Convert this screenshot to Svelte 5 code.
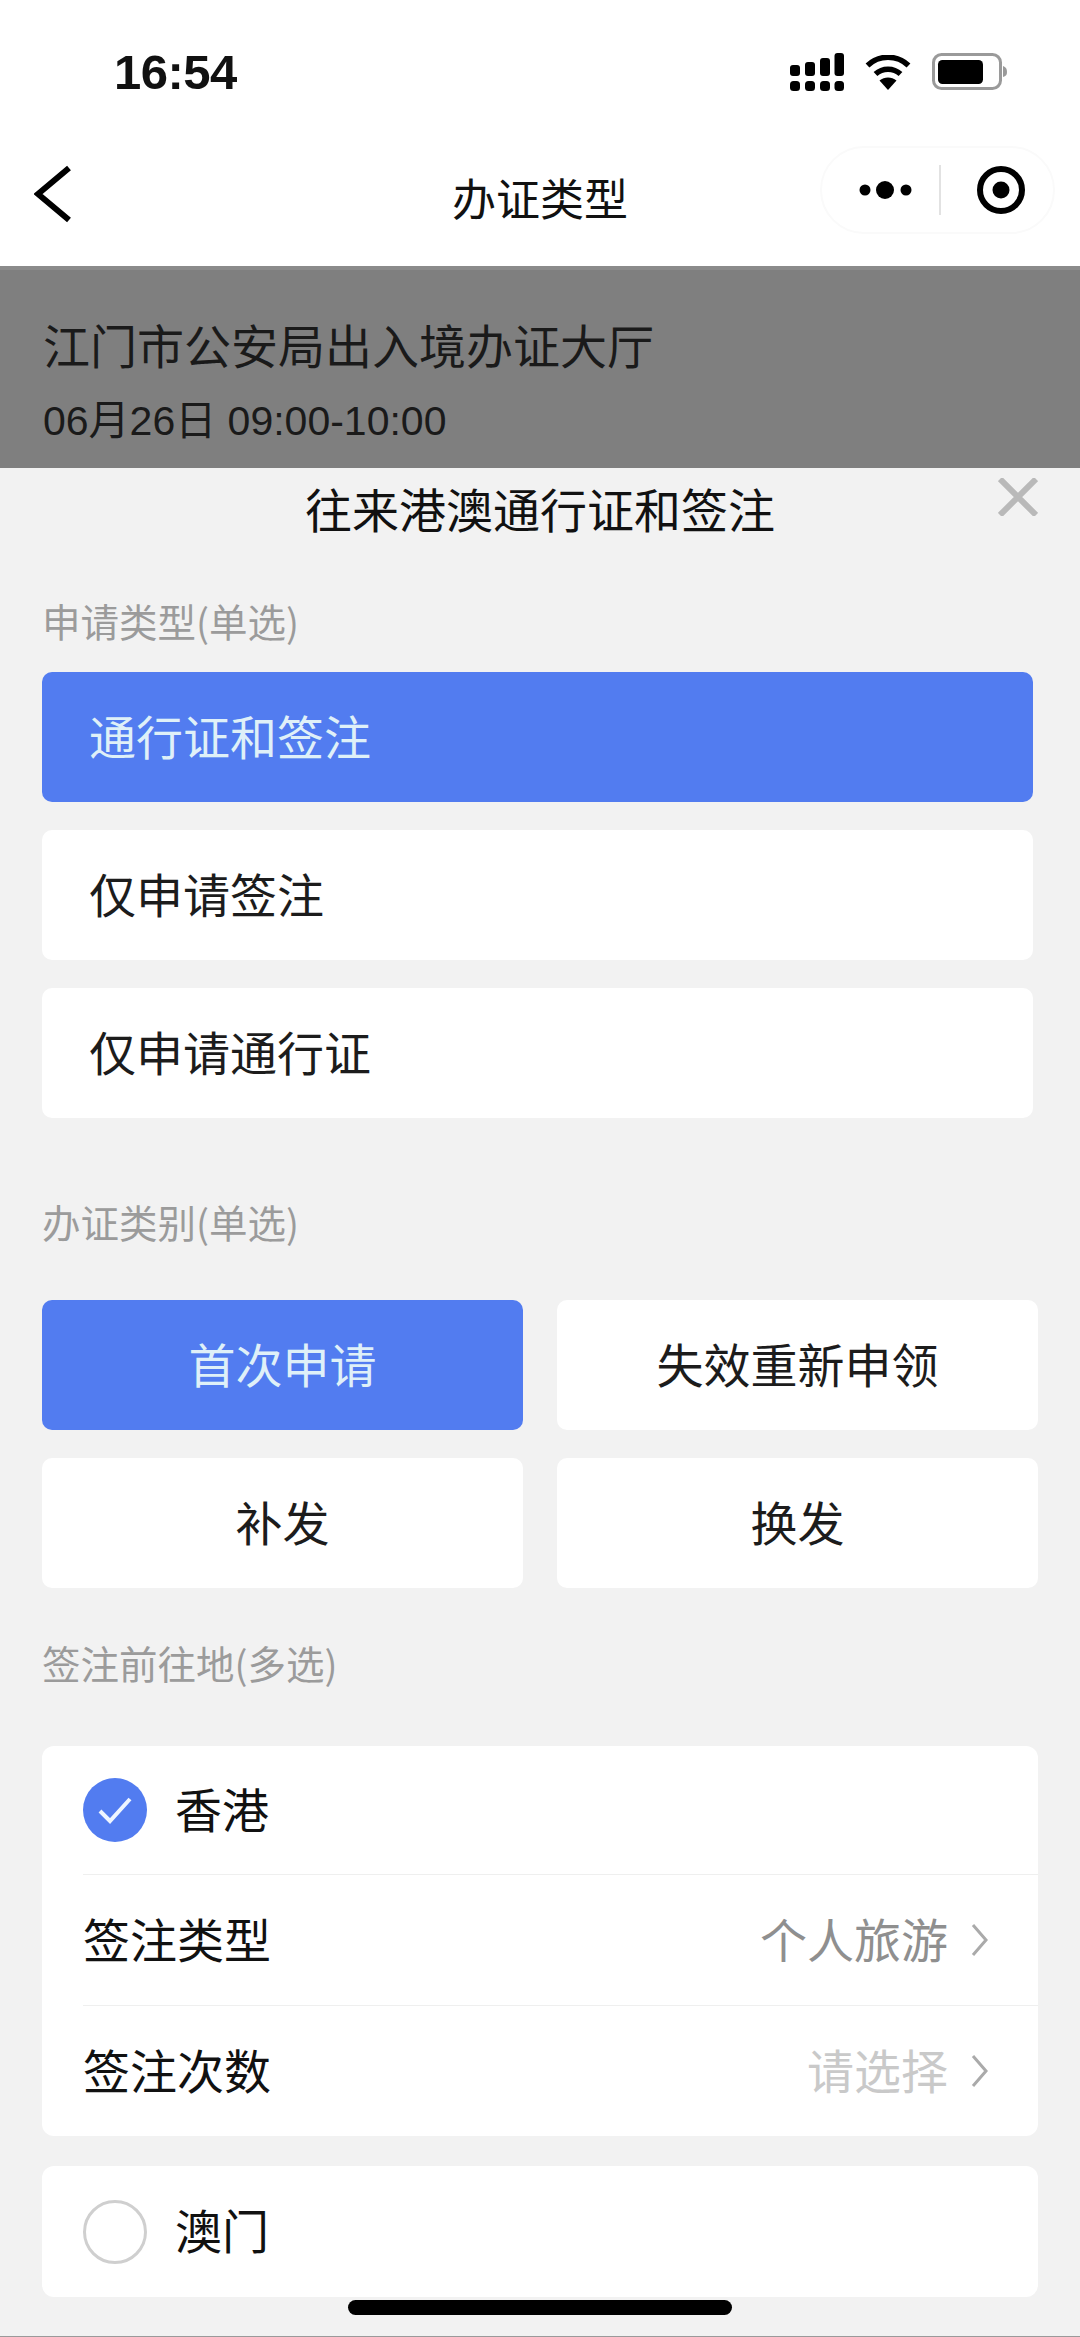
<script lang="ts">
	const applyTypes = [
		{ label: '通行证和签注', active: true },
		{ label: '仅申请签注', active: false },
		{ label: '仅申请通行证', active: false }
	];
	const categories = [
		{ label: '首次申请', active: true },
		{ label: '失效重新申领', active: false },
		{ label: '补发', active: false },
		{ label: '换发', active: false }
	];
</script>

<div class="page">
	<header class="topbar">
		<div class="status">
			<span class="time">16:54</span>
			<div class="status-icons">
				<svg class="signal" width="54" height="38" viewBox="0 0 54 38" fill="#000">
					<rect x="0" y="12" width="10" height="11" rx="3" />
					<rect x="15" y="9" width="10" height="14" rx="3" />
					<rect x="30" y="5" width="10" height="18" rx="3" />
					<rect x="44.500" y="0" width="9.500" height="23" rx="3" />
					<rect x="0" y="28" width="10" height="10" rx="3.500" />
					<rect x="15" y="28" width="10" height="10" rx="3.500" />
					<rect x="30" y="28" width="10" height="10" rx="3.500" />
					<rect x="44.500" y="28" width="9.500" height="10" rx="3.500" />
				</svg>
				<svg class="wifi" width="46" height="35" viewBox="0 0 46 35">
					<path d="M2.500 10.500C14 -0.500 32 -0.500 43.500 10.500" fill="none" stroke="#000" stroke-width="5.500" />
					<path d="M10.500 19C17.500 12.500 28.500 12.500 35.500 19" fill="none" stroke="#000" stroke-width="5.500" />
					<path d="M23 35L14.500 25.500C19.500 21.500 26.500 21.500 31.500 25.500Z" fill="#000" />
				</svg>
				<svg class="battery" width="76" height="38" viewBox="0 0 76 38">
					<rect x="1.500" y="1.500" width="67" height="34" rx="8" fill="#fff" stroke="#9a9a9a" stroke-width="3" />
					<rect x="6" y="7" width="45" height="24" rx="4.500" fill="#000" />
					<path d="M71 13C74 14 75 16 75 19C75 22 74 23 71 24Z" fill="#9a9a9a" />
				</svg>
			</div>
		</div>
		<nav class="nav">
			<svg class="back" width="40" height="58" viewBox="0 0 40 58">
				<path d="M35 3L4 29L35 55" fill="none" stroke="#000" stroke-width="6" />
			</svg>
			<h1 class="nav-title">办证类型</h1>
			<div class="capsule">
				<svg width="58" height="24" viewBox="0 0 58 24" fill="#000">
					<circle cx="7" cy="12" r="5.500" />
					<circle cx="27" cy="12" r="9" />
					<circle cx="48" cy="12" r="5.500" />
				</svg>
				<span class="capsule-line"></span>
				<svg width="50" height="50" viewBox="0 0 50 50">
					<circle cx="25" cy="25" r="21" fill="none" stroke="#000" stroke-width="6" />
					<circle cx="25" cy="25" r="8.500" fill="#000" />
				</svg>
			</div>
		</nav>
	</header>

	<section class="office">
		<div class="office-name">江门市公安局出入境办证大厅</div>
		<div class="office-time">06月26日 09:00-10:00</div>
	</section>

	<section class="sheet">
		<svg class="close" width="40" height="38" viewBox="0 0 40 38">
			<path d="M2 1L38 37M38 1L2 37" fill="none" stroke="#b9b9b9" stroke-width="6" />
		</svg>
		<h2 class="sheet-title">往来港澳通行证和签注</h2>

		<div class="label label-first">申请类型(单选)</div>
		<div class="stack">
			{#each applyTypes as item}
				<div class="option left" class:active={item.active}>{item.label}</div>
			{/each}
		</div>

		<div class="label label-second">办证类别(单选)</div>
		<div class="grid">
			{#each categories as item}
				<div class="option center" class:active={item.active}>{item.label}</div>
			{/each}
		</div>

		<div class="label label-third">签注前往地(多选)</div>
		<div class="card">
			<div class="row row-head">
				<span class="check on">
					<svg width="64" height="64" viewBox="0 0 64 64">
						<path d="M17 33L27 43L47 21" fill="none" stroke="#eef5ff" stroke-width="4" />
					</svg>
				</span>
				<span class="text">香港</span>
			</div>
			<div class="row field">
				<span class="text">签注类型</span>
				<span class="text value">个人旅游</span>
				<svg class="chevron" width="18" height="32" viewBox="0 0 18 32">
					<path d="M2 1L15 16L2 31" fill="none" stroke="#aaa" stroke-width="3" />
				</svg>
			</div>
			<div class="row field">
				<span class="text">签注次数</span>
				<span class="text value empty">请选择</span>
				<svg class="chevron" width="18" height="32" viewBox="0 0 18 32">
					<path d="M2 1L15 16L2 31" fill="none" stroke="#aaa" stroke-width="3" />
				</svg>
			</div>
		</div>
		<div class="card card-macau">
			<div class="row row-macau">
				<span class="check"></span>
				<span class="text">澳门</span>
			</div>
		</div>
	</section>

	<div class="home-bar"></div>
</div>

<style>
	:global(body) {
		margin: 0;
		background: #f2f2f2;
	}

	.page {
		position: relative;
		width: 1080px;
		height: 2337px;
		overflow: hidden;
		font-family: 'Noto Sans CJK SC', 'Liberation Sans', sans-serif;
		color: #111;
		border-bottom: 1px solid #9a9a9a;
		box-sizing: border-box;
	}

	.topbar {
		height: 266px;
		background: #fff;
	}

	.status {
		display: flex;
		align-items: center;
		justify-content: space-between;
		height: 144px;
		padding: 0 72px 0 114px;
		box-sizing: border-box;
	}

	.time {
		font-family: 'Liberation Sans', sans-serif;
		font-size: 49px;
		font-weight: 700;
		letter-spacing: -0.5px;
		color: #111;
	}

	.status-icons {
		display: flex;
		align-items: center;
		gap: 21px;
	}

	.nav {
		position: relative;
		display: flex;
		align-items: center;
		justify-content: center;
		height: 104px;
	}

	.back {
		position: absolute;
		left: 34px;
		top: 21px;
	}

	.nav-title {
		margin: 2px 0 0 0;
		font-size: 44px;
		font-weight: 400;
		line-height: 60px;
		color: #111;
	}

	.capsule {
		position: absolute;
		right: 25px;
		top: 2px;
		display: flex;
		align-items: center;
		width: 235px;
		height: 88px;
		box-sizing: border-box;
		padding-left: 36px;
		border: 2px solid #fafafa;
		border-radius: 44px;
	}

	.capsule-line {
		width: 2px;
		height: 50px;
		margin: 0 35px 0 23px;
		background: #e2e2e2;
	}

	.office {
		display: flex;
		flex-direction: column;
		height: 202px;
		padding: 0 0 0 43px;
		box-sizing: border-box;
		background: #7f7f7f;
		color: #1a1a1a;
		border-top: 4px solid #8b8b8b;
	}

	.office-name {
		margin-top: 44px;
		font-size: 47px;
		line-height: 60px;
	}

	.office-time {
		margin-top: 25px;
		font-family: 'Liberation Sans', 'Noto Sans CJK SC', sans-serif;
		font-size: 41px;
		line-height: 44px;
	}

	.sheet {
		position: relative;
		padding: 0 42px;
		background: #f2f2f2;
	}

	.close {
		position: absolute;
		top: 10px;
		right: 42px;
	}

	.sheet-title {
		margin: 0;
		height: 84px;
		font-size: 47px;
		font-weight: 400;
		line-height: 80px;
		text-align: center;
		color: #111;
	}

	.label {
		height: 60px;
		font-size: 38.500px;
		line-height: 56px;
		color: #9b9b9b;
	}

	.label-first {
		margin-top: 40px;
		margin-bottom: 20px;
	}

	.label-second {
		margin-top: 75px;
		margin-bottom: 47px;
	}

	.label-third {
		margin-top: 46px;
		margin-bottom: 52px;
	}

	.stack {
		display: flex;
		flex-direction: column;
		gap: 28px;
		width: 991px;
	}

	.grid {
		display: grid;
		grid-template-columns: 481px 481px;
		gap: 28px 34px;
	}

	.option {
		display: flex;
		align-items: center;
		height: 130px;
		padding-bottom: 5px;
		box-sizing: border-box;
		background: #fff;
		border-radius: 10px;
		font-size: 47px;
		color: #1c1c1c;
	}

	.option.left {
		padding-left: 47px;
	}

	.option.center {
		justify-content: center;
	}

	.option.active {
		background: #527cf0;
		color: #dff0f8;
	}

	.card {
		width: 996px;
		background: #fff;
		border-radius: 12px;
	}

	.card-macau {
		margin-top: 30px;
	}

	.row {
		display: flex;
		align-items: center;
		height: 130px;
		margin-left: 41px;
		font-size: 47px;
		color: #111;
	}

	.row-head {
		height: 128px;
	}

	.row-macau {
		height: 131px;
	}

	.row + .row {
		border-top: 1px solid #efefef;
	}

	.text {
		position: relative;
		top: -3px;
	}

	.check {
		flex: none;
		width: 64px;
		height: 64px;
		margin-right: 28px;
		box-sizing: border-box;
		border: 3px solid #cfcfcf;
		border-radius: 50%;
	}

	.check.on {
		border: 0;
		background: #527cf0;
	}

	.check svg {
		display: block;
	}

	.field {
		padding-right: 49px;
	}

	.value {
		margin-left: auto;
		margin-right: 23px;
		color: #8f8f8f;
	}

	.value.empty {
		color: #c9c9c9;
	}

	.home-bar {
		position: absolute;
		left: 348px;
		bottom: 21px;
		width: 384px;
		height: 15px;
		border-radius: 8px;
		background: #000;
	}
</style>
